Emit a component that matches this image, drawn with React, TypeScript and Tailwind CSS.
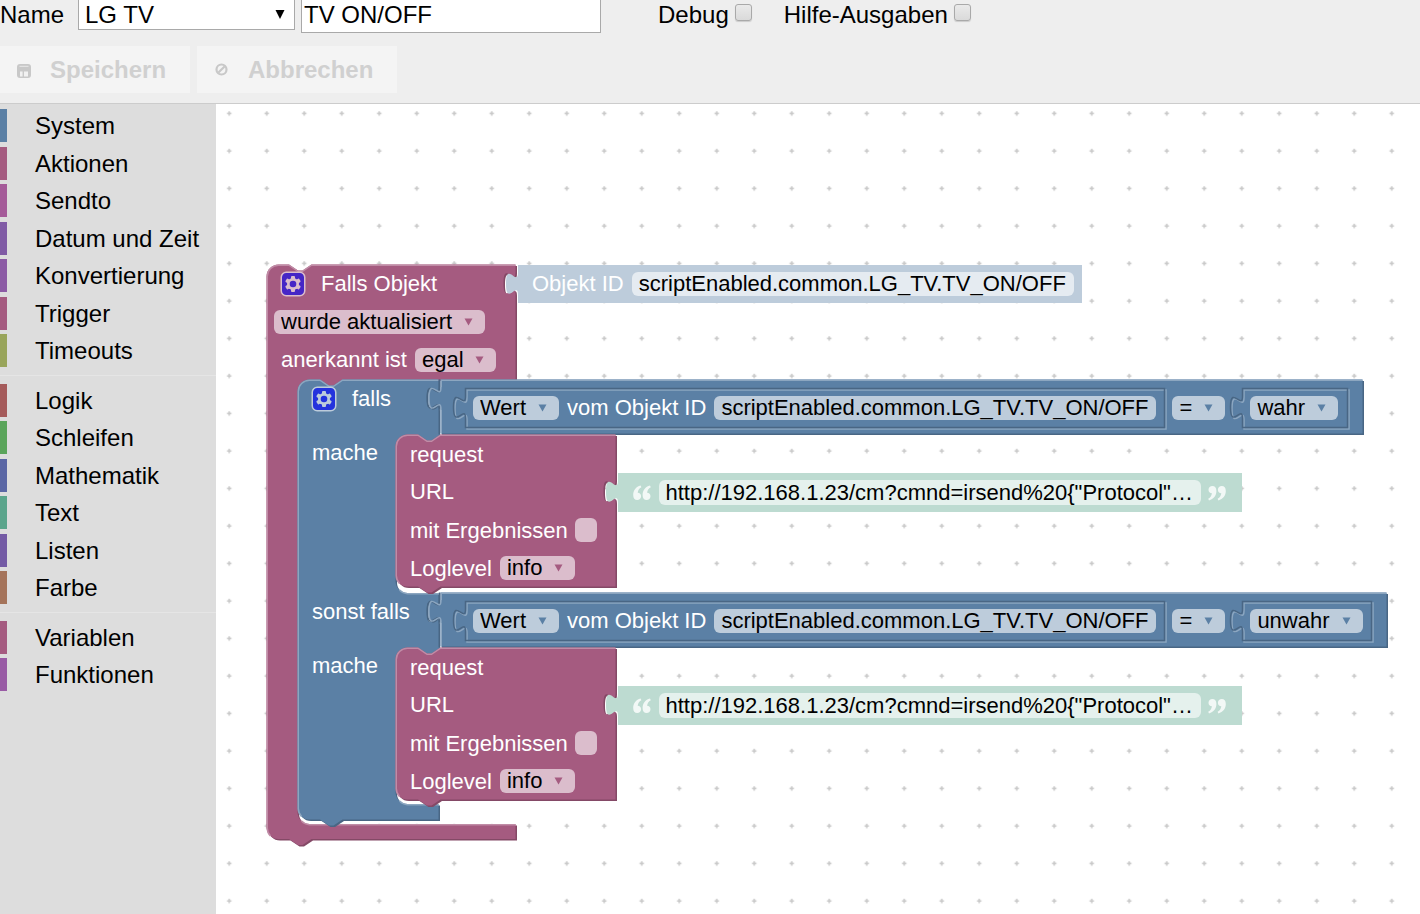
import { useId, type ReactNode } from "react";

type Category = { name: string; bar: string };

const GROUPS: { height: string; items: Category[] }[] = [
  {
    height: "h-[258px]",
    items: [
      { name: "System", bar: "bg-[#5b80a5]" },
      { name: "Aktionen", bar: "bg-[#a55b80]" },
      { name: "Sendto", bar: "bg-[#a55b99]" },
      { name: "Datum und Zeit", bar: "bg-[#805ba5]" },
      { name: "Konvertierung", bar: "bg-[#8c5ba5]" },
      { name: "Trigger", bar: "bg-[#a55b80]" },
      { name: "Timeouts", bar: "bg-[#99a55b]" },
    ],
  },
  {
    height: "h-[220px]",
    items: [
      { name: "Logik", bar: "bg-[#a55b5b]" },
      { name: "Schleifen", bar: "bg-[#5ba55b]" },
      { name: "Mathematik", bar: "bg-[#5b67a5]" },
      { name: "Text", bar: "bg-[#5ba58c]" },
      { name: "Listen", bar: "bg-[#745ba5]" },
      { name: "Farbe", bar: "bg-[#a5745b]" },
    ],
  },
  {
    height: "h-[70px]",
    items: [
      { name: "Variablen", bar: "bg-[#a55b80]" },
      { name: "Funktionen", bar: "bg-[#995ba5]" },
    ],
  },
];

/* Block outline geometry */
const PURPLE = { main: "#a55b80", dark: "#844966", light: "#c08ca6" };
const BLUE = { main: "#5b80a5", dark: "#496684", light: "#8ca6c0" };
type Tone = typeof PURPLE;

const NOTCH = "l 9,6 h 4.5 l 9,-6";
const NOTCH_BACK = "l -9,6 h -4.5 l -9,-6";
const TAB_DOWN = "v 7.5 c 0,15 -12,-12 -12,11.25 s 12,-3.75 12,11.25";
const TAB_UP = "c 0,-15 -12,12 -12,-11.25 s 12,3.75 12,-11.25";
const SLOT_IN = `${NOTCH_BACK} h -10.5 a 12,12 0 0 0 -12,12`;

const topEdge = (w: number) => `M 0,12 A 12,12 0 0 1 12,0 H 22.5 ${NOTCH} H ${w}`;
const bottomEdge = (h: number) => `V ${h} H 45 ${NOTCH_BACK} H 12 a 12,12 0 0 1 -12,-12 Z`;
const slot = (x: number, top: number, bottom: number, w: number) =>
  `V ${top} H ${x + 45} ${SLOT_IN} V ${bottom - 12} a 12,12 0 0 0 12,12 H ${w}`;
const output = (w: number, h: number) => `M 0,0 H ${w} V ${h} H 0 V 30 ${TAB_UP} Z`;

const stackLight = (w: number, h: number) =>
  `M 4,${h - 3} A 12,12 0 0 1 0.75,${h - 12} V 12 A 11.25,11.25 0 0 1 12,0.75 H 22.5 ${NOTCH} H ${w}`;
const slotLight = (x: number, bottom: number, w: number) =>
  `M ${x + 4},${bottom - 3} a 12,12 0 0 0 8,3.75 H ${w}`;

function Shape({ tone, outline, light, children }: { tone: Tone; outline: string; light: string; children?: ReactNode }) {
  return (
    <svg className="absolute left-0 top-0 h-px w-px overflow-visible" aria-hidden="true">
      <g transform="translate(-.5 -.5)">
        <path d={outline} fill={tone.dark} transform="translate(1.5 1.5)" />
        <path d={outline} fill={tone.main} />
        <path d={light} fill="none" stroke={tone.light} strokeWidth="1.5" />
        {children}
      </g>
    </svg>
  );
}

function InlineFrame({ x, w }: { x: number; w: number }) {
  const d = `M ${x},9 h ${w} v 39 h ${-w} V 39 ${TAB_UP} Z`;
  return (
    <g fill="none" strokeWidth="1.5">
      <path d={d} stroke={BLUE.light} transform="translate(1.5 1.5)" />
      <path d={d} stroke={BLUE.dark} />
    </g>
  );
}

function Dropdown({ label, value, width, arrow }: { label: string; value: string; width: string; arrow: string }) {
  return (
    <span className={`relative block shrink-0 ${width}`}>
      <select
        aria-label={label}
        className="block h-6 w-full appearance-none rounded-md bg-white/60 pl-[7px] text-[22px] leading-6 text-black outline-none"
      >
        <option>{value}</option>
      </select>
      <svg viewBox="0 0 9 8" className={`pointer-events-none absolute right-3 top-2 h-2 w-[9px] ${arrow}`} aria-hidden="true">
        <path d="M0.5 0.5h8L4.5 7.5z" fill="currentColor" />
      </svg>
    </span>
  );
}

function GearButton({ fill, rim }: { fill: string; rim: string }) {
  return (
    <button type="button" aria-label="Block konfigurieren" className="block size-[26px] shrink-0">
      <svg viewBox="0 0 26 26" className="size-full" aria-hidden="true">
        <rect x="1.25" y="1.25" width="23.5" height="23.5" rx="5" fill={fill} stroke={rim} strokeWidth="1.5" />
        <g fill={rim}>
          <circle cx="13" cy="13" r="6" />
          {[0, 60, 120].map((a) => (
            <rect key={a} x="11" y="5" width="4" height="16" rx="1" transform={`rotate(${a} 13 13)`} />
          ))}
        </g>
        <circle cx="13" cy="13" r="3.3" fill={fill} />
      </svg>
    </button>
  );
}

function Quote({ closing = false }: { closing?: boolean }) {
  return (
    <svg viewBox="0 0 18 16" className={`h-4 w-[18px] shrink-0 ${closing ? "rotate-180" : ""}`} aria-hidden="true">
      <g fill="#fff" fillOpacity=".8">
        <path d="M7.6 .6C3 1.800.2 5.500.2 10c0 3.200 1.500 5 4 5 2.200 0 3.900-1.500 3.900-3.800 0-2.100-1.400-3.500-3.400-3.500C5.100 5.200 6 3.500 8.400 2.300z" />
        <path d="M17 .6c-4.600 1.200-7.400 4.900-7.400 9.400 0 3.200 1.500 5 4 5 2.200 0 3.900-1.500 3.900-3.800 0-2.100-1.400-3.500-3.400-3.500.4-2.500 1.300-4.200 3.700-5.400z" />
      </g>
    </svg>
  );
}

function Compare({ value, width, field, frame }: { value: string; width: number; field: string; frame: number }) {
  return (
    <div className="absolute left-[143px] top-0 flex h-[55px] items-center whitespace-nowrap pl-8">
      <Shape
        tone={BLUE}
        outline={output(width, 54)}
        light={`M 0.75,54 V 30 M 0.75,7.5 V 0.75 H ${width}`}
      >
        <path d={`M -1,30 ${TAB_UP} V 0`} fill="none" stroke={BLUE.dark} strokeWidth="1.5" />
        <path d={`M .5,30 ${TAB_UP}`} fill="none" stroke={BLUE.light} strokeWidth="1.5" />
        <InlineFrame x={25} w={699} />
        <InlineFrame x={802} w={frame} />
      </Shape>
      <div className="relative flex items-center">
        <Dropdown label="Attribut" value="Wert" width="w-[86px]" arrow="text-[#5b80a5]" />
        <span className="mx-2">vom Objekt ID</span>
        <button type="button" className="h-6 w-[442px] rounded-md bg-white/60 pl-[7px] text-left leading-6 text-black">
          scriptEnabled.common.LG_TV.TV_ON/OFF
        </button>
        <span className="ml-4 mr-[25px]">
          <Dropdown label="Vergleich" value="=" width="w-[53px]" arrow="text-[#5b80a5]" />
        </span>
        <Dropdown label="Wahrheitswert" value={value} width={field} arrow="text-[#5b80a5]" />
      </div>
    </div>
  );
}

function Request() {
  const id = useId();
  const w = 220;
  const h = 152;
  return (
    <div className="absolute left-[98px] top-0 w-[222px] whitespace-nowrap">
      <Shape
        tone={PURPLE}
        outline={`${topEdge(w)} V 38 ${TAB_DOWN} ${bottomEdge(h)}`}
        light={stackLight(w, h)}
      />
      <div className="relative pl-[14px]">
        <div className="flex h-[38px] items-center">request</div>
        <div className="flex h-[38px] items-center pb-0.5">URL</div>
        <div className="flex h-[38px] items-center gap-[7px]">
          <label htmlFor={id}>mit Ergebnissen</label>
          <input id={id} type="checkbox" className="h-6 w-[22px] appearance-none rounded-md bg-white/60" />
        </div>
        <div className="flex h-[38px] items-center gap-2">
          <span>Loglevel</span>
          <Dropdown label="Loglevel" value="info" width="w-[75px]" arrow="text-[#a55b80]" />
        </div>
      </div>
      <div className="absolute left-[222px] top-[38px] flex h-[39px] w-[624px] items-center pl-[15px] pr-4">
        <svg className="absolute left-0 top-0 h-px w-px overflow-visible" aria-hidden="true">
          <path d={output(624, 39)} fill="#bddbd1" />
        </svg>
        <div className="relative flex w-full items-center justify-between">
          <Quote />
          <button type="button" className="h-[25px] w-[542px] rounded-md bg-white/60 pl-[7px] text-left leading-[23px] text-black">
            {'http://192.168.1.23/cm?cmnd=irsend%20{"Protocol"…'}
          </button>
          <Quote closing />
        </div>
      </div>
    </div>
  );
}

function IfBlock() {
  const w = 141;
  const outline = [
    topEdge(w),
    TAB_DOWN,
    slot(98, 55, 213.5, w),
    TAB_DOWN,
    slot(98, 268, 424.5, w),
    bottomEdge(440),
  ].join(" ");
  return (
    <div className="absolute left-[31px] top-[115px] w-[142px]">
      <Shape tone={BLUE} outline={outline} light={`${stackLight(w, 440)} ${slotLight(98, 213.5, w)} ${slotLight(98, 424.5, w)}`} />
      <div className="relative">
        <div className="relative h-[55px]">
          <div className="flex h-[38px] items-center gap-[15px] pl-[13px]">
            <GearButton fill="#2433dd" rim="#bdccdb" />
            <span className="pb-0.5">falls</span>
          </div>
          <Compare value="wahr" width={922} field="w-[88px]" frame={105} />
        </div>
        <div className="relative h-[158px]">
          <div className="flex h-[34px] items-center pl-[14px]">mache</div>
          <Request />
        </div>
        <div className="relative h-[55px]">
          <div className="flex h-9 items-center whitespace-nowrap pl-[14px]">sonst falls</div>
          <Compare value="unwahr" width={946} field="w-[113px]" frame={129} />
        </div>
        <div className="relative h-[158px]">
          <div className="flex h-[34px] items-center pl-[14px]">mache</div>
          <Request />
        </div>
      </div>
    </div>
  );
}

function TriggerBlock() {
  const w = 249;
  const outline = [topEdge(w), TAB_DOWN, slot(31, 115, 559.5, w), bottomEdge(574.5)].join(" ");
  return (
    <div className="absolute left-[51px] top-[161px] w-[251px] text-[22px] text-white">
      <Shape tone={PURPLE} outline={outline} light={`${stackLight(w, 574.5)} ${slotLight(31, 559.5, w)}`} />
      <div className="relative whitespace-nowrap">
        <div className="flex h-[38px] items-center gap-[15px] pl-[13px]">
          <GearButton fill="#4626c6" rim="#dbbdcc" />
          <span className="pb-0.5">Falls Objekt</span>
        </div>
        <div className="flex h-[38px] items-center pl-[7px]">
          <Dropdown label="Auslöser" value="wurde aktualisiert" width="w-[211px]" arrow="text-[#a55b80]" />
        </div>
        <div className="flex h-[38px] items-center gap-2 pl-[14px]">
          <span className="pb-0.5">anerkannt ist</span>
          <Dropdown label="Anerkannt" value="egal" width="w-[81px]" arrow="text-[#a55b80]" />
        </div>
        <div className="absolute left-[251px] top-0 flex h-[38px] w-[564px] items-center pl-[14px]">
          <svg className="absolute left-0 top-0 h-px w-px overflow-visible" aria-hidden="true">
            <path d={output(564, 38)} fill="#bdccdb" />
          </svg>
          <div className="relative flex items-center gap-2">
            <span className="pb-0.5">Objekt ID</span>
            <button type="button" className="h-6 w-[442px] rounded-md bg-white/60 pl-[7px] text-left leading-6 text-black">
              scriptEnabled.common.LG_TV.TV_ON/OFF
            </button>
          </div>
        </div>
      </div>
      <IfBlock />
    </div>
  );
}

function Toolbox() {
  return (
    <nav className="w-[216px] shrink-0 bg-[#ddd] pt-[5px]" aria-label="Blöcke">
      {GROUPS.map((group, i) => (
        <div key={group.height} className={i > 0 ? "mt-2 border-t border-[#e5e5e5] pt-2" : ""}>
          <ul className={`flex flex-col justify-between ${group.height}`}>
            {group.items.map((item) => (
              <li key={item.name} className="flex h-[33px]">
                <span className={`w-[7px] ${item.bar}`} />
                <button type="button" className="flex-1 pl-7 text-left text-2xl leading-[33px]">
                  {item.name}
                </button>
              </li>
            ))}
          </ul>
        </div>
      ))}
    </nav>
  );
}

const CHECKBOX =
  "size-[17px] appearance-none rounded-[3px] border border-[#a9a9a9] bg-linear-to-b from-[#eaeaea] to-[#dadada] shadow-[0_1px_1px_rgba(0,0,0,0.15)]";

function Header() {
  return (
    <header className="h-[104px] shrink-0 border-b border-[#ccc] bg-[#eee] text-2xl">
      <div className="flex h-[33px] items-start leading-[30px]">
        <label htmlFor="group" className="w-[78px]">
          Name
        </label>
        <span className="relative block w-[217px]">
          <select
            id="group"
            className="block h-[30px] w-full appearance-none border border-t-0 border-[#a9a9a9] bg-white pl-1.5 text-2xl leading-[29px] outline-none"
          >
            <option>LG TV</option>
          </select>
          <svg viewBox="0 0 10 9" className="pointer-events-none absolute right-[10px] top-[10px] h-[9px] w-[10px]" aria-hidden="true">
            <path d="M0.5 0h9L5 9z" />
          </svg>
        </span>
        <input
          type="text"
          aria-label="Skriptname"
          defaultValue="TV ON/OFF"
          className="ml-1.5 h-[33px] w-[300px] border border-t-0 border-[#a9a9a9] bg-white pb-[3px] pl-0.5 outline-none"
        />
        <label htmlFor="debug" className="ml-[57px]">
          Debug
        </label>
        <input id="debug" type="checkbox" className={`ml-1.5 mt-1 ${CHECKBOX}`} />
        <label htmlFor="help" className="ml-8">
          Hilfe-Ausgaben
        </label>
        <input id="help" type="checkbox" className={`ml-1.5 mt-1 ${CHECKBOX}`} />
      </div>
      <div className="mt-[13px] flex gap-[7px] font-bold text-[#d0d0d0]">
        <button type="button" disabled className="flex h-[47px] w-[190px] items-center gap-[19px] bg-[#f4f4f4] pl-[17px]">
          <svg viewBox="0 0 14 14" className="mt-0.5 size-[14px]" aria-hidden="true">
            <rect width="14" height="14" rx="3" fill="#c8c8c8" />
            <path d="M2.5 1.8h9v1.2h-9z" fill="#e2e2e2" />
            <path d="M3 7.600h2.600v4.800H3zM7 7.600h4v4.800H7z" fill="#f1f1f1" />
          </svg>
          Speichern
        </button>
        <button type="button" disabled className="flex h-[47px] w-[200px] items-center gap-5 bg-[#f4f4f4] pl-[18px]">
          <svg viewBox="0 0 13 13" className="size-[13px]" fill="none" stroke="#c8c8c8" strokeWidth="2.2" aria-hidden="true">
            <circle cx="6.5" cy="6.5" r="5" />
            <path d="M3.2 9.800l6.600-6.600" />
          </svg>
          Abbrechen
        </button>
      </div>
    </header>
  );
}

export default function App() {
  return (
    <div className="flex min-h-screen flex-col bg-white font-['Liberation_Sans',Arial,sans-serif] text-black">
      <Header />
      <div className="flex flex-1">
        <Toolbox />
        <main className="relative min-h-[760px] flex-1 overflow-hidden bg-white">
          <svg className="absolute inset-0 size-full" aria-hidden="true">
            <defs>
              <pattern id="dots" x="-5.5" y="-9.5" width="37.5" height="37.5" patternUnits="userSpaceOnUse">
                <path d="M16.5 19h4.500M18.750 16.750v4.500" stroke="#c8c8c8" strokeWidth="1.5" />
              </pattern>
            </defs>
            <rect width="100%" height="100%" fill="url(#dots)" />
          </svg>
          <TriggerBlock />
        </main>
      </div>
    </div>
  );
}
